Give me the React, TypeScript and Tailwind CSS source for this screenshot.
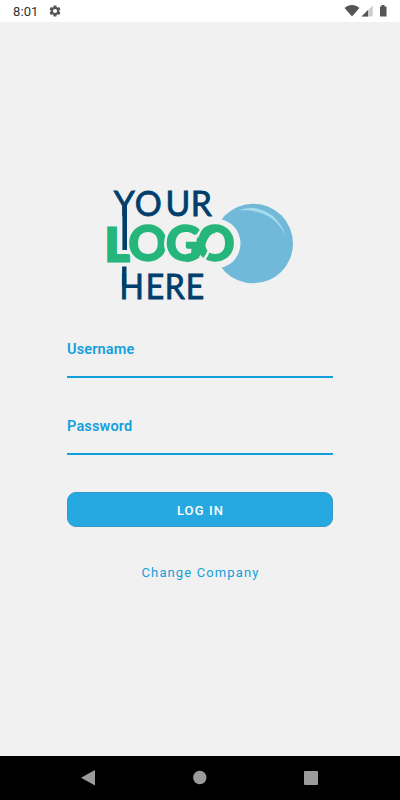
function StatusBar() {
  return (
    <header className="flex h-[22px] items-center bg-white px-[13px] text-[#555]">
      <span className="pt-px text-[13px] leading-none tracking-[0.1px] text-[#333]">8:01</span>
      <svg className="ml-[10px] h-[14px] w-[14px]" viewBox="0 0 24 24" fill="currentColor">
        <path d="M19.14 12.94c.04-.3.06-.61.06-.94s-.02-.64-.07-.94l2.03-1.58c.18-.14.23-.41.12-.61l-1.92-3.32c-.12-.22-.37-.29-.59-.22l-2.39.96c-.5-.38-1.03-.7-1.62-.94l-.36-2.54c-.04-.24-.24-.41-.48-.41h-3.84c-.24 0-.43.17-.47.41l-.36 2.54c-.59.24-1.13.57-1.62.94l-2.39-.96c-.22-.08-.47 0-.59.22L2.74 8.87c-.12.21-.08.47.12.61l2.03 1.58c-.05.3-.09.63-.09.94s.02.64.07.94l-2.03 1.58c-.18.14-.23.41-.12.61l1.92 3.32c.12.22.37.29.59.22l2.39-.96c.5.38 1.03.7 1.62.94l.36 2.54c.05.24.24.41.48.41h3.84c.24 0 .44-.17.47-.41l.36-2.54c.59-.24 1.13-.56 1.62-.94l2.39.96c.22.08.47 0 .59-.22l1.92-3.32c.12-.22.07-.47-.12-.61zM12 15.6a3.6 3.6 0 1 1 0-7.2 3.6 3.6 0 0 1 0 7.2z" />
      </svg>
      <svg className="ml-auto h-[22px] w-[43px]" viewBox="344 0 43 22" fill="currentColor">
        <path d="M344.6 8c4-4.1 10.8-4.1 14.8 0L352 16.5z" />
        <path d="M372.7 5.5v11h-11.2z" fill="#ccc" />
        <path d="M368 10.1v6.4h-6.5z" />
        <path d="M380 6.5h1.5V5h3v1.5h2v10H380z" />
      </svg>
    </header>
  );
}

function Logo() {
  return (
    <svg className="h-[120px] w-[190px] overflow-visible" viewBox="105 185 190 120" fontFamily="Lato, sans-serif">
      <circle cx="253.2" cy="243.5" r="39.8" fill="#71b9d8" />
      <path d="M239 210.5C256 203 280 213 285.7 237C279 219 262 209 239 210.5z" fill="#a5dcec" />
      <circle cx="215.5" cy="243.5" r="25" fill="#f1f1f1" />
      <g fill="#003e6c" stroke="#003e6c" strokeWidth="0.9" fontSize="35.5">
        <text x="119.8 141.8 174.1 200.8" y="216.3" transform="scale(.95 1)">
          YOUR
        </text>
        <text x="132.8 162 183.2 206.5" y="299.4" transform="scale(.9 1)">
          HERE
        </text>
      </g>
      <g fill="#26b67c" stroke="#26b67c" strokeWidth="1.4" fontSize="48.5" fontWeight="900">
        <text x="105" y="261.3" fontSize="46.5" strokeWidth="2.8">
          L
        </text>
        <circle cx="148.5" cy="243.5" r="22" fill="#f1f1f1" stroke="none" />
        <text x="128.3" y="261">O</text>
        <circle cx="185.5" cy="243.5" r="21.5" fill="#f1f1f1" stroke="none" />
        <text x="165.7" y="261">G</text>
        <text x="195.6" y="261">O</text>
      </g>
      {/* ribbon that ties the last two letters together */}
      <path
        d="M186 258C196 258 199 250 201.5 243.5C204 236 208 229 215.5 229"
        fill="none"
        stroke="#26b67c"
        strokeWidth="8"
      />
      <path d="M199.5 264.5C204 260.5 207 256 208.5 251" fill="none" stroke="#f1f1f1" strokeWidth="2.5" />
      <path d="M197.5 237.5C199 233 201 229.5 203.5 226.5" fill="none" stroke="#f1f1f1" strokeWidth="1.5" />
      <path d="M122.4 205h4.6v45h-4.6zM122.1 266.5h4.4v20h-4.4z" fill="#003e6c" />
    </svg>
  );
}

function Field({ label, type }: { label: string; type: string }) {
  return (
    <label className="flex h-[38px] w-full flex-col border-b-2 border-[#12a0dc] text-[14.5px] font-semibold leading-5 tracking-[0.15px] text-[#12a0dc]">
      {label}
      <input type={type} className="h-4 w-full bg-transparent outline-none" />
    </label>
  );
}

function NavigationBar() {
  return (
    <nav className="h-11 bg-black">
      <svg className="h-11 w-full" viewBox="0 756 400 44" fill="#9b9b9b">
        <path d="M81 777.7L95 770v15.4z" />
        <circle cx="199.8" cy="777.5" r="6.7" />
        <rect x="304" y="771" width="14" height="14" rx="1" />
      </svg>
    </nav>
  );
}

export default function App() {
  return (
    <div className="flex h-[800px] w-[400px] flex-col bg-[#f1f1f1] font-['Roboto',sans-serif]">
      <StatusBar />
      <main className="flex flex-1 flex-col items-center px-[67px] pt-[163px]">
        <Logo />
        <form className="mt-[35px] flex w-full flex-col items-center">
          <Field label="Username" type="text" />
          <div className="mt-[39px] w-full">
            <Field label="Password" type="password" />
          </div>
          <button
            type="button"
            className="mt-[37px] h-[35px] w-full rounded-[9px] border border-[#3899c8] bg-[#26a8e1] pl-px pt-[2px] text-[13px] font-medium tracking-[1.1px] text-white"
          >
            LOG IN
          </button>
          <button type="button" className="mt-[36px] pl-px text-[13px] leading-5 tracking-[1.12px] text-[#12a0dc]">
            Change Company
          </button>
        </form>
      </main>
      <NavigationBar />
    </div>
  );
}
